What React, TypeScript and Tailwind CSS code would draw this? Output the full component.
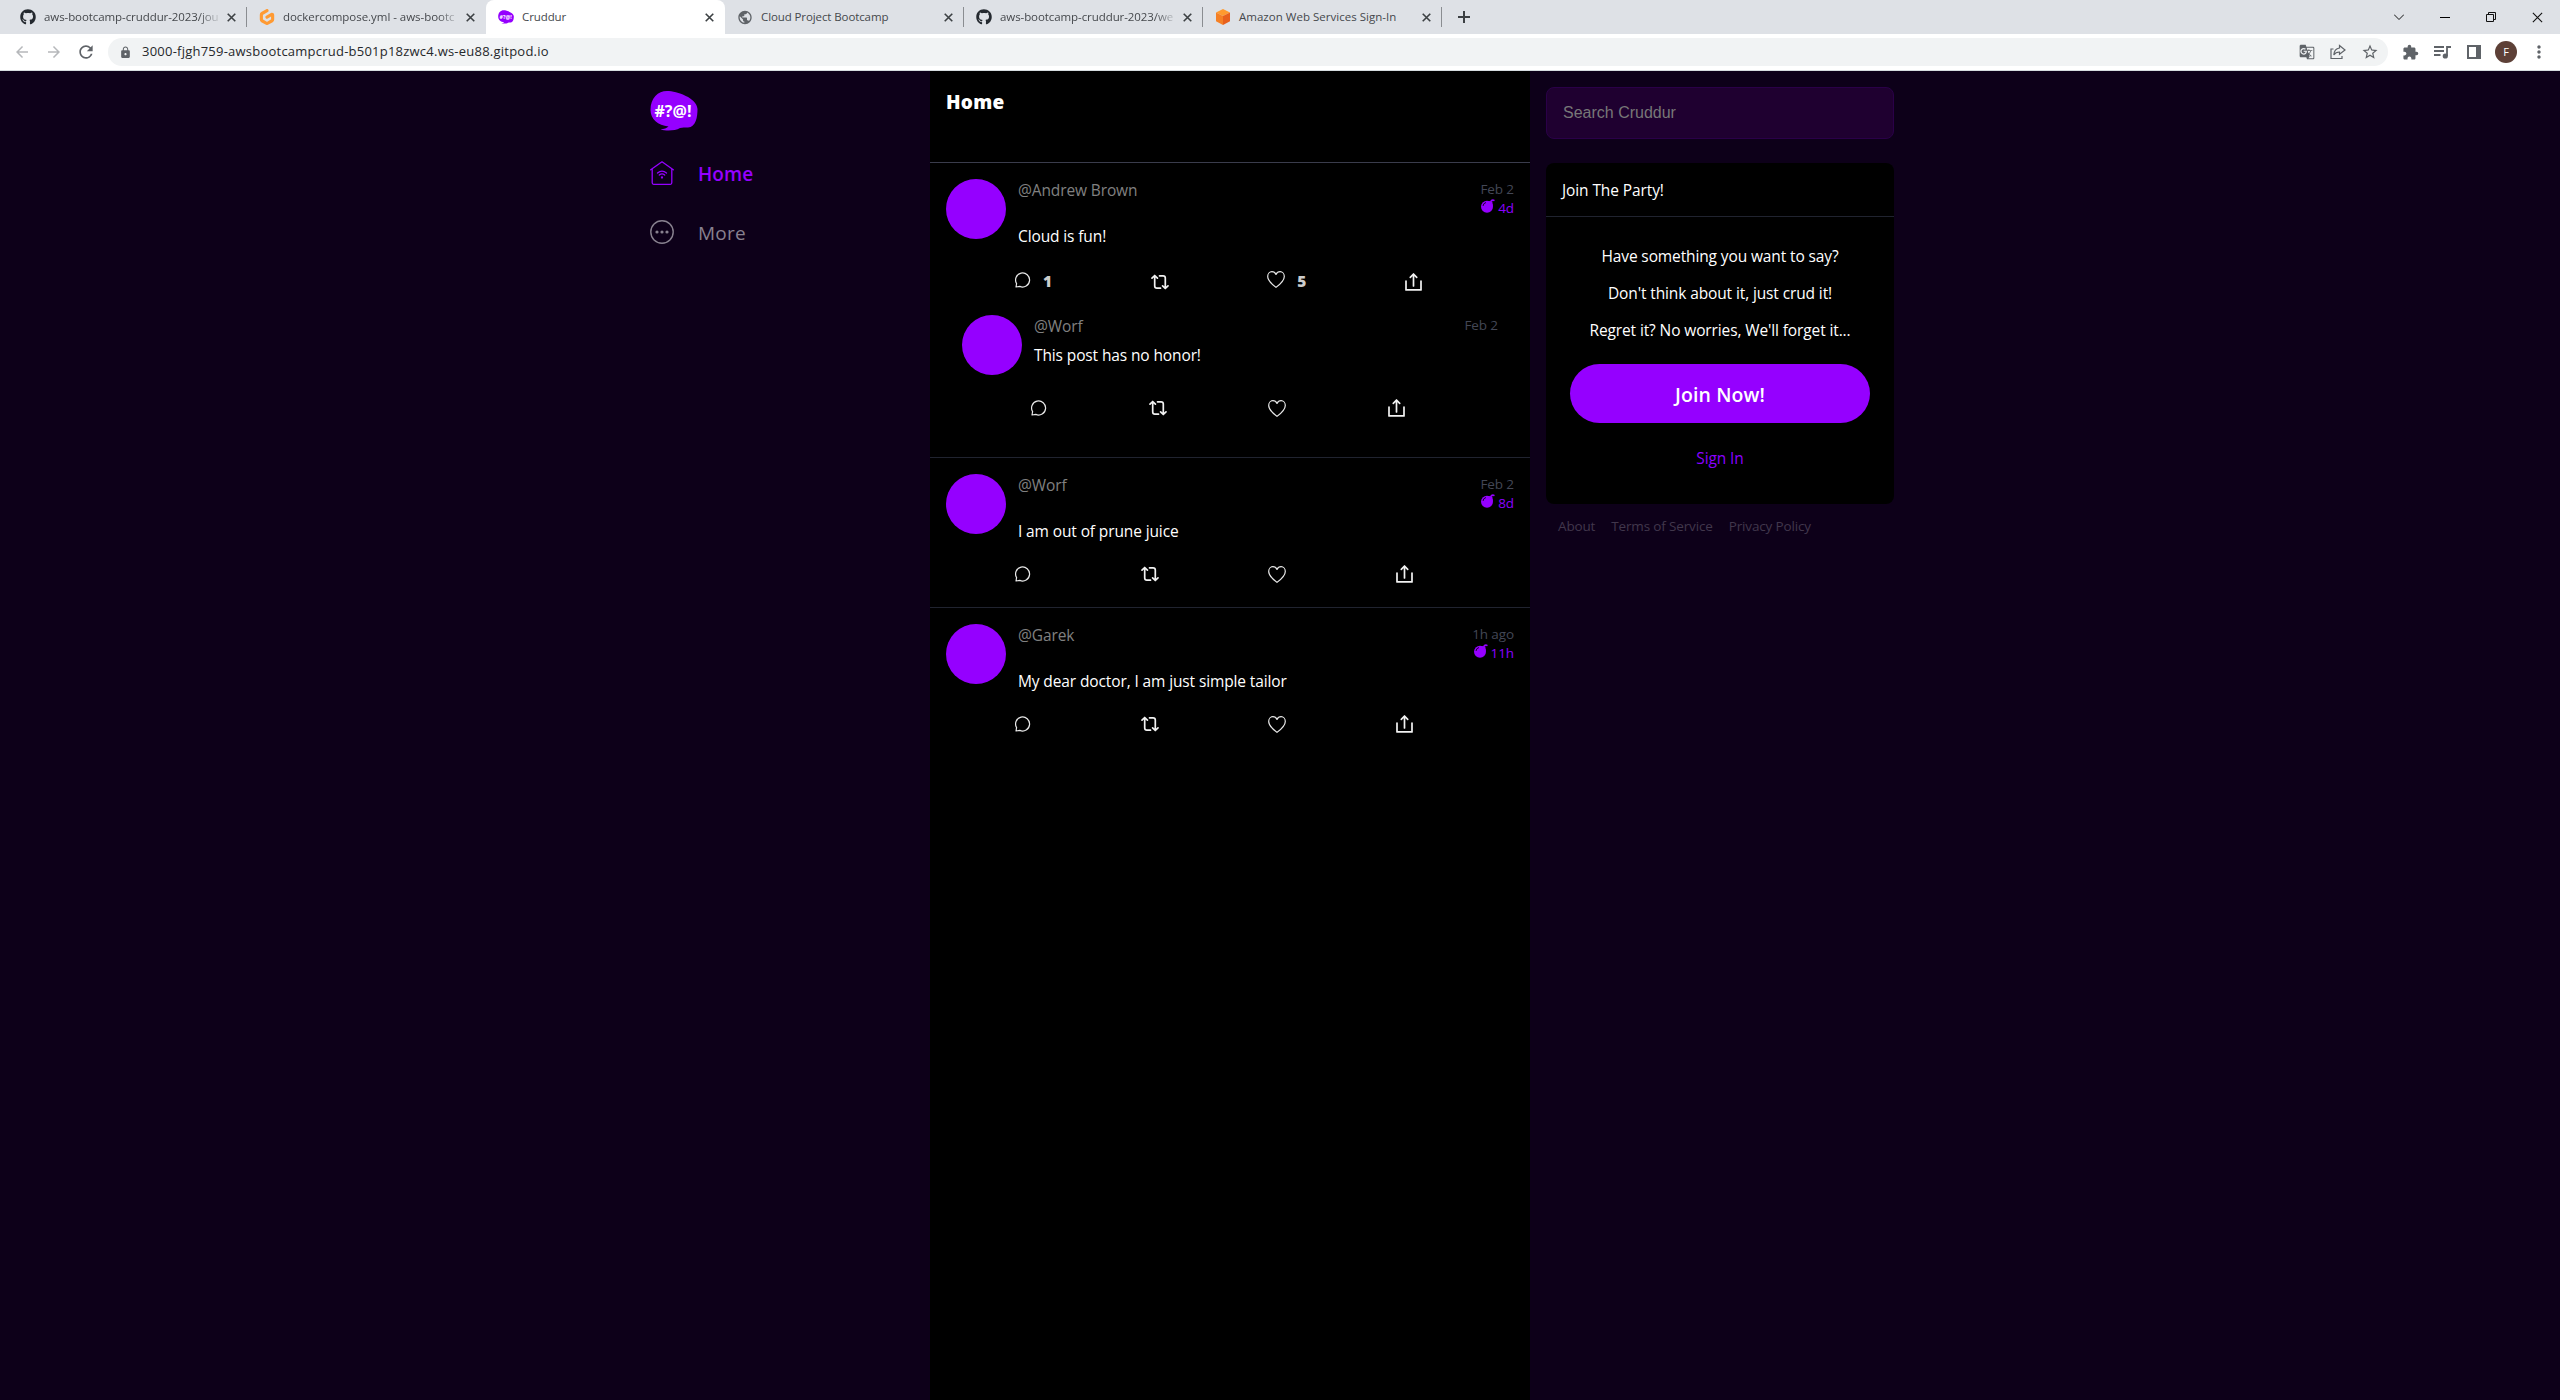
import React from "react";
import { FaGithub } from "react-icons/fa";
import { SiGitpod } from "react-icons/si";
import { MdStarBorder, MdExtension, MdQueueMusic, MdLock, MdArrowBack, MdArrowForward, MdRefresh, MdPublic, MdMoreVert, MdGTranslate } from "react-icons/md";

const SANS = "font-['Open_Sans','Noto_Sans',sans-serif]";

function BubbleLogo({ className }: { className: string }) {
  return (
    <svg viewBox="0 0 48 40" className={className}>
      <path d="M17 0C27 0 47 7 47.500 18C47.500 26 46 36 38 36.500C34 36.500 33 36.500 30 37C25 40 16 40 10.500 38.500C14 38 17 37 18.500 35.500C8 34.500 .5 28 .5 19C.5 7 8 0 17 0Z" fill="#9500ff" />
      <text x="23" y="26" textAnchor="middle" fontSize="16.500" textLength="37" lengthAdjust="spacingAndGlyphs" fontWeight="700" fill="#fff" className="font-['Open_Sans',sans-serif]">#?@!</text>
    </svg>
  );
}

function AwsCube() {
  return (
    <svg viewBox="0 0 16 16" className="size-4">
      <path d="M8 0L15 3.500L8 7L1 3.500Z" fill="#ff9a2e" />
      <path d="M1 3.500L8 7V16L1 12.300Z" fill="#f58025" />
      <path d="M15 3.500L8 7V16L15 12.300Z" fill="#e8601c" />
    </svg>
  );
}

function Cross({ className, w = 1.8 }: { className: string; w?: number }) {
  return (
    <svg viewBox="0 0 10 10" className={className} fill="none" stroke="currentColor" strokeWidth={w}>
      <path d="M.8.8L9.200 9.200M9.200.8L.8 9.200" />
    </svg>
  );
}

type TabProps = { icon: React.ReactNode; title: string; text: string; active?: boolean; fade?: boolean; sep?: boolean };

function Tab({ icon, title, text, active, fade, sep }: TabProps) {
  return (
    <div className={"flex h-[34px] w-[239px] shrink-0 items-center pl-3 " + (active ? "rounded-t-lg bg-white" : "")}>
      <span className="flex size-4 shrink-0 items-center justify-center">{icon}</span>
      <span className={"ml-2 w-[175px] whitespace-nowrap text-[11.500px] text-[#45484c] " + text + (fade ? " [mask-image:linear-gradient(to_right,black_155px,transparent_178px)]" : "")}>{title}</span>
      <Cross className="ml-[8px] size-[9px] text-[#3c4043]" />
      <span className={"ml-[10px] h-5 w-px shrink-0 " + (sep ? "bg-[#8a8d91]" : "")} />
    </div>
  );
}

function TabStrip() {
  return (
    <div className="flex h-[34px] bg-[#dee1e6] pl-2">
      <Tab icon={<FaGithub className="size-4 text-[#24292f]" />} title="aws-bootcamp-cruddur-2023/jou" text="tracking-[-0.08px]" fade sep />
      <Tab icon={<SiGitpod className="size-4 text-[#ff9a33]" />} title="dockercompose.yml - aws-bootc" text="tracking-[-0.04px]" fade />
      <Tab icon={<BubbleLogo className="size-4" />} title="Cruddur" text="tracking-[-0.1px]" active />
      <Tab icon={<MdPublic className="size-[17px] text-[#5f6368]" />} title="Cloud Project Bootcamp" text="tracking-[-0.1px]" sep />
      <Tab icon={<FaGithub className="size-4 text-[#24292f]" />} title="aws-bootcamp-cruddur-2023/we" text="tracking-[-0.08px]" fade sep />
      <Tab icon={<AwsCube />} title="Amazon Web Services Sign-In" text="tracking-[0.02px]" sep />
      <div className="flex w-[46px] items-center justify-center pr-0.5">
        <svg viewBox="0 0 12 12" className="size-3" stroke="#3c4043" strokeWidth="2"><path d="M6 0V12M0 6H12" /></svg>
      </div>
      <div className="ml-auto grid w-[184px] grid-cols-4 place-items-center text-[#111]">
        <svg viewBox="0 0 10 6" className="h-[6px] w-[10px]" fill="none" stroke="currentColor"><path d="M0 .5L5 5.500L10 .5" /></svg>
        <span className="h-px w-[10px] bg-black" />
        <svg viewBox="0 0 10 10" className="size-[10px]" fill="none" stroke="currentColor"><path d="M.5 2.500H7.500V9.500H.5ZM2.500 2.500V.5H9.500V7.500H7.500" /></svg>
        <Cross className="size-[11px]" w={1} />
      </div>
    </div>
  );
}

function Toolbar() {
  return (
    <div className="flex h-[37px] items-center border-b border-[#d5dcdf] bg-white text-[#5f6368]">
      <MdArrowBack className="ml-[13px] size-[18px] text-[#b6b8bb]" />
      <MdArrowForward className="ml-[14px] size-[18px] text-[#b6b8bb]" />
      <MdRefresh className="ml-[13px] size-[20px]" />
      <div className="ml-[12px] flex h-7 w-[2280px] items-center rounded-full bg-[#f1f3f4] pl-[11px] pr-[9px]">
        <MdLock className="size-[13px]" />
        <span className="ml-[10px] text-[13px] tracking-[0.23px] text-[#26282b]">3000-fjgh759-awsbootcampcrud-b501p18zwc4.ws-eu88.gitpod.io</span>
        <div className="ml-auto flex items-center gap-[15px]">
          <MdGTranslate className="size-[16px]" />
          <svg viewBox="0 0 16 16" className="size-4" fill="none" stroke="currentColor" strokeWidth="1.200"><path d="M3.500 5H1V14.500H12V12M9.500 1.500L15 6L9.500 10.300V8C7 8 5 9 3.800 11C4 7.500 6 4.500 9.500 4Z" /></svg>
          <MdStarBorder className="size-[18px]" />
        </div>
      </div>
      <div className="ml-[14px] flex items-center">
        <MdExtension className="size-[17px]" />
        <MdQueueMusic className="ml-[13px] size-[21px] -scale-x-100 rotate-180 hidden" />
        <svg viewBox="0 0 17 14" className="ml-[15px] h-[14px] w-[17px]" fill="none" stroke="currentColor" strokeWidth="1.800">
          <path d="M0 2H10M0 6H10M0 10H6.500M13 11V2H17" />
          <circle cx="11.300" cy="11" r="1.800" fill="currentColor" stroke="none" />
          <circle cx="11.300" cy="11" r="1.700" />
        </svg>
        <span className="ml-[16px] h-[14px] w-[14px] border-2 border-r-[5px] border-[#5f6368]" />
        <span className="ml-[14px] flex size-[22px] items-center justify-center rounded-full bg-[#5d4037] text-[11px] text-white">F</span>
        <MdMoreVert className="ml-[12px] size-5" />
      </div>
    </div>
  );
}

function HomeIcon() {
  return (
    <svg viewBox="0 0 24 24" className="size-6" fill="none" stroke="#9500ff" strokeWidth="1.300" strokeLinecap="round" strokeLinejoin="round">
      <path d="M.7 8.800L12 .8L23.300 8.800M2.200 8V21.800Q2.200 23.300 3.700 23.300H20.300Q21.800 23.300 21.800 21.800V8" />
      <path d="M7.500 12Q12 8.200 16.500 12M9.300 14Q12 11.800 14.700 14" />
      <circle cx="12" cy="16.500" r=".5" fill="#9500ff" />
    </svg>
  );
}

function MoreIcon() {
  return (
    <svg viewBox="0 0 24 24" className="size-6" fill="none" stroke="#88818f" strokeWidth="1.400">
      <circle cx="12" cy="12" r="11.200" />
      <g fill="#88818f" stroke="none"><circle cx="7" cy="12" r="1.600" /><circle cx="12" cy="12" r="1.600" /><circle cx="17" cy="12" r="1.600" /></g>
    </svg>
  );
}

function LeftNav() {
  return (
    <nav className="w-[280px]">
      <BubbleLogo className="mt-5 h-10 w-12" />
      <div className="mt-[30px] flex h-6 items-center text-[19px] font-semibold text-[#9500ff]">
        <HomeIcon /><span className="ml-6 mt-[3px] tracking-[0.05px]">Home</span>
      </div>
      <div className="mt-[35px] flex h-6 items-center text-[19px] text-[#88818f]">
        <MoreIcon /><span className="ml-6 mt-[3px] tracking-[0.2px]">More</span>
      </div>
    </nav>
  );
}

function ReplyIcon() {
  return (
    <svg viewBox="0 0 16 16" className="size-4" fill="none" stroke="#e8e8e8" strokeWidth="1.200" strokeLinejoin="round">
      <path d="M1 15L1.600 11.600A7 7 0 1 1 4.800 14.400Z" />
    </svg>
  );
}

function RepostIcon() {
  return (
    <svg viewBox="0 0 18 16" className="h-4 w-[18px]" fill="none" stroke="#f2f2f2" strokeWidth="1.700" strokeLinecap="round" strokeLinejoin="round">
      <path d="M1 4.200L3.700 1.500L6.400 4.200M3.700 2V12Q3.700 14.200 5.900 14.200H9.500M8.500 1.800H12.100Q14.300 1.800 14.300 4V14M11.600 11.800L14.300 14.500L17 11.800" />
    </svg>
  );
}

function HeartIcon() {
  return (
    <svg viewBox="0 0 18 17" className="h-[17px] w-[18px]" fill="none" stroke="#e8e8e8" strokeWidth="1.200" strokeLinejoin="round">
      <path d="M9 16.400C5 13.300.7 9.800.7 5.400C.7 2.800 2.600.7 4.900.7C6.800.7 8.200 1.700 9 3.400C9.800 1.700 11.200.7 13.100.7C15.400.7 17.300 2.800 17.300 5.400C17.300 9.800 13 13.300 9 16.400Z" />
    </svg>
  );
}

function ShareIcon() {
  return (
    <svg viewBox="0 0 17 18" className="h-[18px] w-[17px]" fill="none" stroke="#f2f2f2" strokeWidth="1.700" strokeLinecap="round" strokeLinejoin="round">
      <path d="M1 8V16.900H16V8M8.500 13V1.300M5.300 4.300L8.500 1L11.700 4.300" />
    </svg>
  );
}

function BombIcon() {
  return (
    <svg viewBox="0 0 14 14" className="mb-[5px] size-[14px]">
      <circle cx="6" cy="7.700" r="6" fill="#9500ff" />
      <path d="M6.500 2L11.300 2.500L12 7.500Z" fill="#9500ff" />
      <path d="M9.500 2.800Q11 .2 13.500 1.600" stroke="#9500ff" fill="none" strokeWidth="1.500" />
      <path d="M2 7Q2.300 4.200 5 3.500" stroke="#000" fill="none" strokeWidth=".8" />
    </svg>
  );
}

type PostProps = { handle: string; ago: string; ttl?: string; message: string; replies?: string; likes?: string; nested?: boolean; actions: string };

function Post({ handle, ago, ttl, message, replies, likes, nested, actions }: PostProps) {
  const lift = replies ? "-mt-[5px]" : "";
  return (
    <article>
      <div className="flex">
        <div className="size-[60px] shrink-0 rounded-full bg-[#9500ff]" />
        <div className="ml-3 flex grow justify-between">
          <div className="pt-px">
            <div className="h-5 text-[15.500px] leading-5 tracking-[-0.12px] text-[#808080]">{handle}</div>
            <div className={"h-5 whitespace-nowrap text-[15.500px] leading-5 tracking-[-0.12px] text-white " + (nested ? "mt-[9px]" : "mt-[26px]")}>{message}</div>
          </div>
          <div className="flex flex-col items-end pt-px text-[13.500px] leading-[18px] tracking-[-0.1px]">
            <span className="text-[#434756]">{ago}</span>
            {ttl && <span className="mt-px flex h-[18px] items-center gap-[3px] text-[#8a00ff]"><BombIcon />{ttl}</span>}
          </div>
        </div>
      </div>
      <div className={"flex items-center justify-between " + actions}>
        <div className={"flex h-5 items-center " + lift}><ReplyIcon />{replies && <b className="ml-[12px] mt-[5px] text-[15.500px] font-extrabold text-[#ccc]">{replies}</b>}</div>
        <div className="flex h-5 items-center"><RepostIcon /></div>
        <div className={"flex h-5 items-center " + lift}><HeartIcon />{likes && <b className="ml-[12px] mt-[5px] text-[15.500px] font-extrabold text-[#ccc]">{likes}</b>}</div>
        <div className="flex h-5 items-center"><ShareIcon /></div>
      </div>
    </article>
  );
}

function Feed() {
  return (
    <main className="w-[600px] bg-black">
      <header className="h-[92px] border-b border-[#3a3c4c] px-4 pt-[17px] text-[19px] font-extrabold leading-7 tracking-[0.3px] text-white">Home</header>
      <section className="h-[295px] border-b border-[#20232f] px-4 pt-4">
        <Post handle="@Andrew Brown" ago="Feb 2" ttl="4d" message="Cloud is fun!" replies="1" likes="5" actions="mt-[26px] ml-[69px] w-[407px]" />
        <div className="mt-[23px] px-4">
          <Post handle="@Worf" ago="Feb 2" message="This post has no honor!" nested actions="mt-[23px] ml-[69px] w-[374px]" />
        </div>
      </section>
      <section className="h-[150px] border-b border-[#20232f] px-4 pt-4">
        <Post handle="@Worf" ago="Feb 2" ttl="8d" message="I am out of prune juice" actions="mt-[23px] ml-[69px] w-[398px]" />
      </section>
      <section className="px-4 pt-4">
        <Post handle="@Garek" ago="1h ago" ttl="11h" message="My dear doctor, I am just simple tailor" actions="mt-[23px] ml-[69px] w-[398px]" />
      </section>
    </main>
  );
}

function Sidebar() {
  return (
    <aside className="w-[380px] px-4 pt-4">
      <div className="flex h-[52px] items-center rounded-lg border border-[#2a0048] bg-[#1f0030] px-4 font-['Liberation_Sans',Arial,sans-serif] text-base text-[#777]">Search Cruddur</div>
      <div className="mt-6 h-[341px] rounded-lg bg-black text-[15.500px] text-white">
        <div className="flex h-[54px] items-center border-b border-[#20232f] pl-4 pt-[3px] tracking-[-0.1px]">Join The Party!</div>
        <div className="flex flex-col items-center pt-[21px] leading-[37px] tracking-[-0.12px]">
          <p>Have something you want to say?</p>
          <p>Don't think about it, just crud it!</p>
          <p>Regret it? No worries, We'll forget it...</p>
          <button className="mt-[15px] h-[59px] w-[300px] rounded-full bg-[#9500ff] pt-[2px] text-[19.500px] font-semibold tracking-[0.1px]">Join Now!</button>
          <a className="mt-[17px] text-[#8a00ff]">Sign In</a>
        </div>
      </div>
      <footer className="mt-[12px] flex gap-4 pl-3 text-[13.500px] leading-5 tracking-[-0.15px] text-[#41374c]">
        <a>About</a><a>Terms of Service</a><a>Privacy Policy</a>
      </footer>
    </aside>
  );
}

export default function App() {
  return (
    <div className={"flex h-[1400px] w-[2560px] flex-col overflow-hidden bg-[#0d0019] " + SANS}>
      <TabStrip />
      <Toolbar />
      <div className="flex grow pl-[650px]">
        <LeftNav />
        <Feed />
        <Sidebar />
      </div>
    </div>
  );
}
